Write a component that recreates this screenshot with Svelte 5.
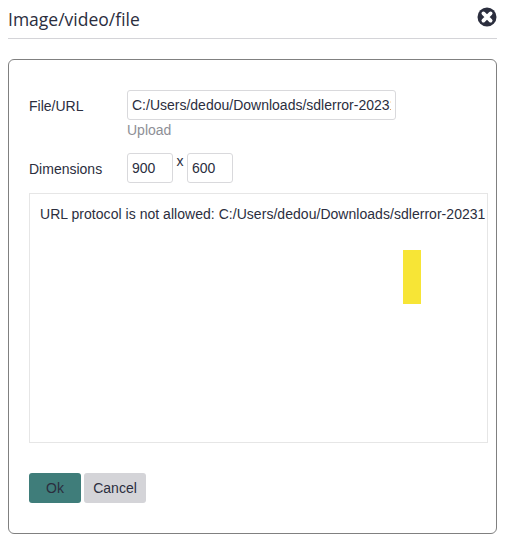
<script>
  let url = $state('C:/Users/dedou/Downloads/sdlerror-20231102.png');
  let width = $state('900');
  let height = $state('600');
</script>

<div class="dialog">
  <header class="head">
    <h1>Image/video/file</h1>
    <button class="close" aria-label="Close">
      <svg viewBox="0 0 20 20" width="20" height="20">
        <circle cx="10" cy="10" r="9.5" fill="#2b2e3e" />
        <path d="M6.4 6.4 L13.6 13.6 M13.6 6.4 L6.4 13.6" stroke="#fff" stroke-width="3.8" stroke-linecap="round" fill="none" />
      </svg>
    </button>
  </header>

  <section class="panel">
    <div class="row file">
      <label for="url">File/URL</label>
      <div class="field">
        <input id="url" class="url" bind:value={url} />
        <a class="upload" href="#upload">Upload</a>
      </div>
    </div>
    <div class="row dims">
      <label for="w">Dimensions</label>
      <input id="w" class="num" bind:value={width} />
      <span class="x">x</span>
      <input class="num" aria-label="Height" bind:value={height} />
    </div>
    <div class="preview">
      <p>URL protocol is not allowed: C:/Users/dedou/Downloads/sdlerror-20231102.png</p>
      <div class="mark"></div>
    </div>
    <div class="actions">
      <button class="btn ok">Ok</button>
      <button class="btn cancel">Cancel</button>
    </div>
  </section>
</div>

<style>
  :global(body) {
    margin: 0;
    background: #fff;
    font-family: "Liberation Sans", Arial, sans-serif;
    font-size: 14px;
    color: #2b2e3e;
  }
  .dialog {
    width: 489px;
    margin-left: 8px;
    display: flex;
    flex-direction: column;
  }
  .head {
    height: 39px;
    box-sizing: border-box;
    border-bottom: 1px solid #d4d4d8;
    display: flex;
    justify-content: space-between;
    align-items: flex-start;
    margin-bottom: 20px;
  }
  h1 {
    margin: 0;
    padding-top: 7px;
    font-family: "Open Sans", sans-serif;
    font-weight: 400;
    font-size: 17.5px;
    line-height: 25px;
    color: #2b2e3e;
  }
  .close {
    border: 0;
    background: none;
    padding: 0;
    margin: 7px 0 0;
    width: 20px;
    height: 20px;
    display: block;
  }
  .close svg { display: block; }
  .panel {
    height: 475px;
    box-sizing: border-box;
    border: 1px solid #808080;
    border-radius: 6px;
    padding: 30px 8px 0 20px;
    display: flex;
    flex-direction: column;
  }
  .row {
    display: flex;
    align-items: flex-start;
  }
  label {
    width: 98px;
    line-height: 20px;
    padding-top: 6px;
    flex: none;
  }
  .field {
    display: flex;
    flex-direction: column;
    align-items: flex-start;
  }
  input {
    box-sizing: border-box;
    height: 30px;
    border: 1px solid #d9d9dc;
    border-radius: 3px;
    padding: 0 4px;
    font: inherit;
    color: inherit;
    background: #fff;
    outline: none;
  }
  .url { width: 269px; }
  .upload {
    color: #8e8f96;
    text-decoration: none;
    line-height: 20px;
  }
  .dims { margin-top: 13px; }
  .num { width: 46px; }
  .x {
    width: 14px;
    text-align: center;
    line-height: 16px;
    font-size: 14px;
  }
  .preview {
    position: relative;
    box-sizing: border-box;
    width: 459px;
    height: 250px;
    margin-top: 10px;
    padding: 10px 2px 0 10px;
    border: 1px solid #e6e6e6;
  }
  .preview p {
    margin: 0;
    overflow: hidden;
    white-space: nowrap;
    letter-spacing: 0.035px;
    line-height: 20px;
  }
  .mark {
    position: absolute;
    left: 373px;
    top: 56px;
    width: 18px;
    height: 54px;
    background: #f7e536;
  }
  .actions {
    display: flex;
    gap: 3px;
    margin-top: 30px;
  }
  .btn {
    height: 30px;
    border: 0;
    border-radius: 3px;
    padding: 0;
    font: inherit;
    color: #2b2e3e;
  }
  .ok { width: 52px; background: #3f7d7a; }
  .cancel { width: 62px; background: #d4d4d8; }
</style>
